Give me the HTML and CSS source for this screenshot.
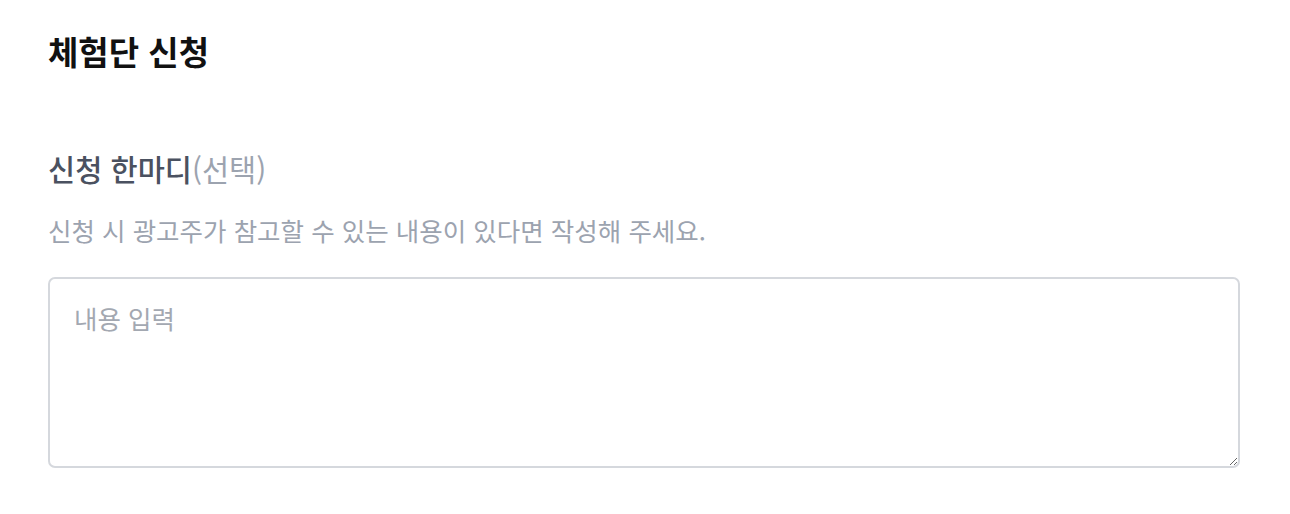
FILE: index.html
```html
<!DOCTYPE html>
<html lang="ko">
<head>
<meta charset="utf-8">
<link rel="stylesheet" href="styles.css">
</head>
<body>
<main class="page">
  <h1 class="title">체험단 신청</h1>
  <section class="field">
    <h2 class="label">신청 한마디<span class="optional">(선택)</span></h2>
    <p class="help">신청 시 광고주가 참고할 수 있는 내용이 있다면 작성해 주세요.</p>
    <textarea class="input" placeholder="내용 입력"></textarea>
  </section>
</main>
</body>
</html>
```
FILE: styles.css
```css
html, body {
  margin: 0;
  padding: 0;
  background: #ffffff;
}
body {
  font-family: "Noto Sans CJK KR", "Noto Sans", sans-serif;
}
.page {
  padding: 29px 48px 0 48px;
  width: 1192px;
}
.title {
  margin: 0;
  font-size: 33px;
  font-weight: 700;
  color: #111111;
  line-height: 44px;
}
.field {
  margin-top: 75px;
}
.label {
  margin: 0;
  font-size: 29.5px;
  font-weight: 500;
  color: #4a5160;
  line-height: 40px;
}
.optional {
  color: #9ca3af;
  font-weight: 400;
}
.help {
  margin: 24px 0 0 0;
  font-size: 25.5px;
  line-height: 36px;
  color: #9ca3af;
}
.input {
  display: block;
  box-sizing: border-box;
  margin-top: 29px;
  width: 1192px;
  height: 191px;
  border: 2px solid #d5d8dd;
  border-radius: 7px;
  padding: 21px 24px;
  font-family: inherit;
  font-size: 25.5px;
  line-height: 36px;
  color: #333;
  outline: none;
}
.input::placeholder {
  color: #a3a8b1;
}
```
